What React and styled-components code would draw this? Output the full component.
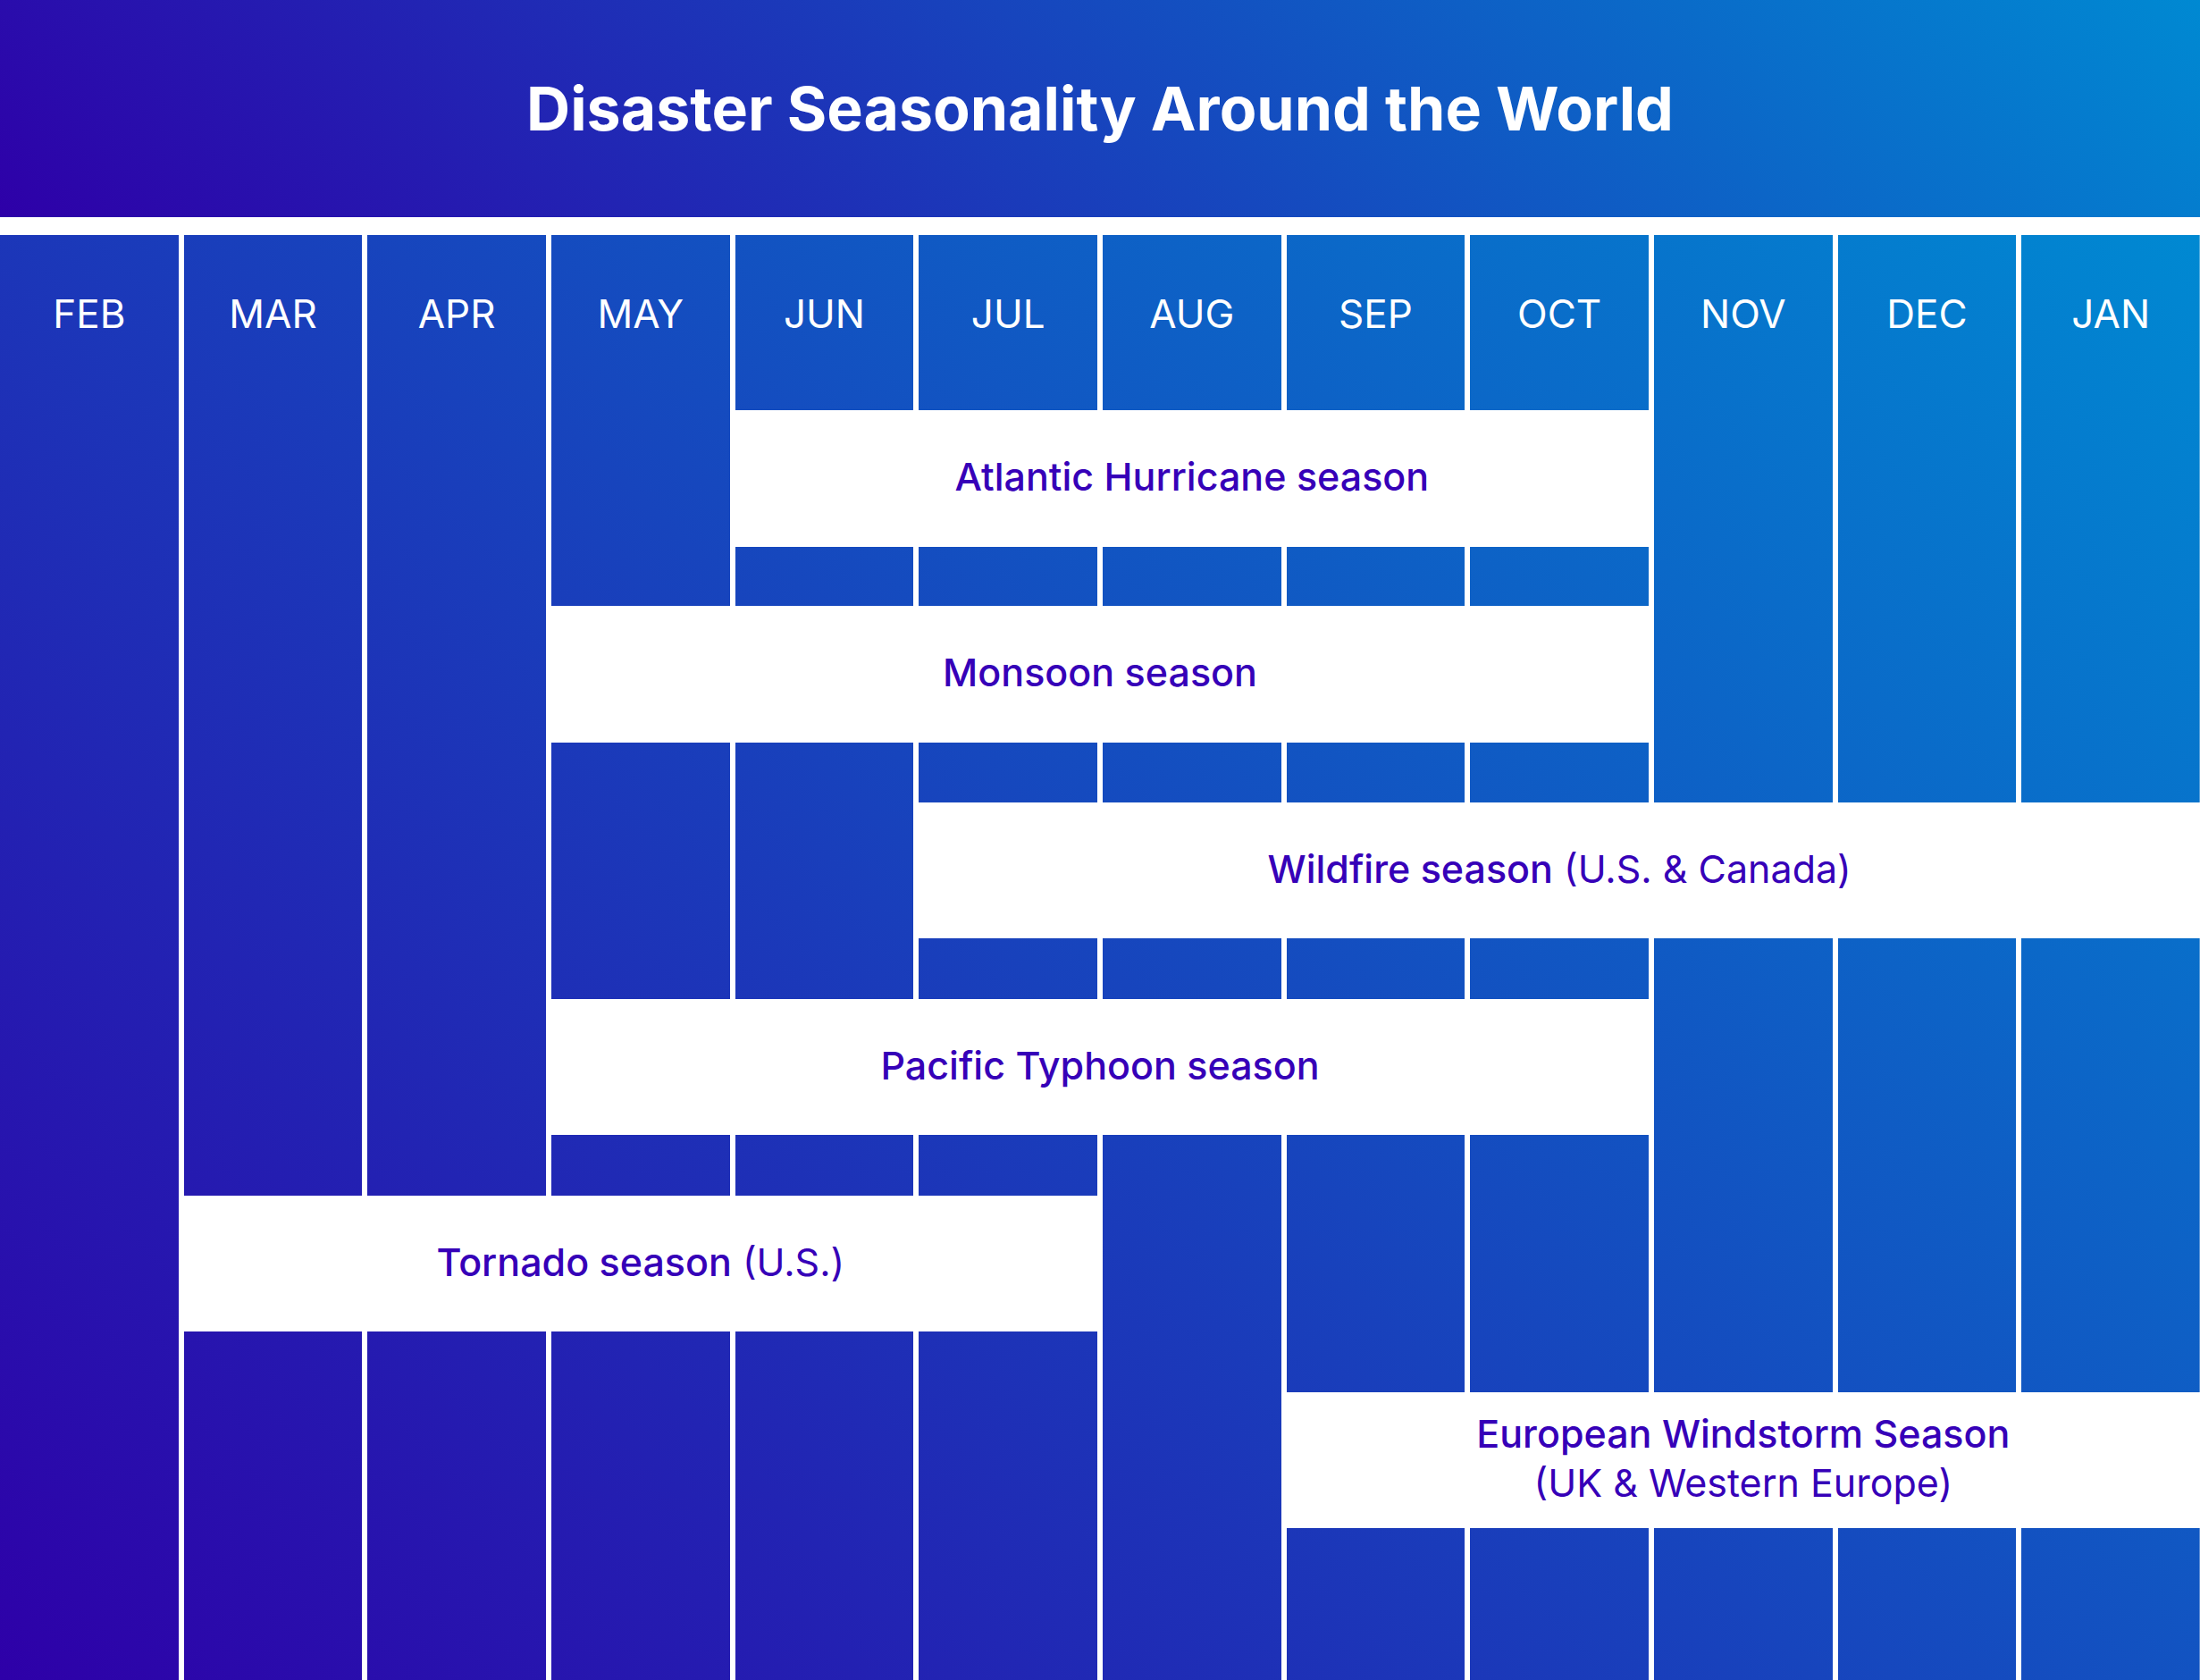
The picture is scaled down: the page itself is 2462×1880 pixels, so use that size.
import React from "react";
import styled, { createGlobalStyle } from "styled-components";

const GlobalStyle = createGlobalStyle`
  html, body {
    margin: 0;
    padding: 0;
    background: #ffffff;
    overflow: hidden;
  }
  body {
    font-family: Inter, "Noto Sans", sans-serif;
  }
`;

const Page = styled.div`
  width: 100vw;
  height: 100vh;
  display: flex;
  flex-direction: column;
  background: #ffffff;
`;

const Header = styled.header`
  flex: none;
  height: 243px;
  display: flex;
  align-items: center;
  justify-content: center;
  background: linear-gradient(45deg, #2e00a8, #0089d2);
`;

const Title = styled.h1`
  margin: 0 0 2px;
  color: #ffffff;
  font-size: 68px;
  font-weight: 700;
  letter-spacing: 0;
`;

const Chart = styled.div`
  flex: 1;
  margin-top: 20px;
  display: grid;
  grid-template-columns: repeat(12, 1fr);
  grid-template-rows: 196px 153px 66px 153px 67px 152px 68px 152px 68px 152px 68px 152px 1fr;
  column-gap: 6px;
`;

const Segment = styled.div`
  grid-column: ${(p) => p.$col};
  grid-row: ${(p) => p.$from} / ${(p) => p.$to};
  background-image: linear-gradient(45deg, #2e00a8, #0089d2);
  background-attachment: fixed;
  background-repeat: no-repeat;
  background-size: 100vw calc(100vh - 263px);
  background-position: 0 263px;
  display: flex;
  justify-content: center;
`;

const Month = styled.span`
  margin-top: 68px;
  color: #ffffff;
  font-size: 44px;
  font-weight: 400;
  line-height: 40px;
  height: 40px;
`;

const Band = styled.div`
  grid-column: ${(p) => p.$cols};
  grid-row: ${(p) => p.$row};
  display: flex;
  flex-direction: column;
  align-items: center;
  justify-content: center;
  padding-bottom: 4px;
  color: #3600b8;
  font-size: 43px;
  line-height: 55px;
  text-align: center;
`;

const Line = styled.div`
  white-space: nowrap;
`;

const Strong = styled.span`
  font-weight: 500;
`;

const Note = styled.span`
  font-weight: 400;
`;

// grid row lines: odd tracks are month blocks, even tracks are season bands
const months = [
  { name: "FEB", segs: [[1, 14]] },
  { name: "MAR", segs: [[1, 10], [11, 14]] },
  { name: "APR", segs: [[1, 10], [11, 14]] },
  { name: "MAY", segs: [[1, 4], [5, 8], [9, 10], [11, 14]] },
  { name: "JUN", segs: [[1, 2], [3, 4], [5, 8], [9, 10], [11, 14]] },
  { name: "JUL", segs: [[1, 2], [3, 4], [5, 6], [7, 8], [9, 10], [11, 14]] },
  { name: "AUG", segs: [[1, 2], [3, 4], [5, 6], [7, 8], [9, 14]] },
  { name: "SEP", segs: [[1, 2], [3, 4], [5, 6], [7, 8], [9, 12], [13, 14]] },
  { name: "OCT", segs: [[1, 2], [3, 4], [5, 6], [7, 8], [9, 12], [13, 14]] },
  { name: "NOV", segs: [[1, 6], [7, 12], [13, 14]] },
  { name: "DEC", segs: [[1, 6], [7, 12], [13, 14]] },
  { name: "JAN", segs: [[1, 6], [7, 12], [13, 14]] },
];

const seasons = [
  { row: 2, cols: "5 / 10", lines: [["Atlantic Hurricane season"]] },
  { row: 4, cols: "4 / 10", lines: [["Monsoon season"]] },
  { row: 6, cols: "6 / 13", lines: [["Wildfire season", "(U.S. & Canada)"]] },
  { row: 8, cols: "4 / 10", lines: [["Pacific Typhoon season"]] },
  { row: 10, cols: "2 / 7", lines: [["Tornado season", "(U.S.)"]] },
  {
    row: 12,
    cols: "8 / 13",
    lines: [["European Windstorm Season"], ["", "(UK & Western Europe)"]],
  },
];

const App = () => {
  return (
    <Page>
      <GlobalStyle />
      <Header>
        <Title>Disaster Seasonality Around the World</Title>
      </Header>
      <Chart>
        {months.map((m, i) =>
          m.segs.map(([from, to], j) => (
            <Segment key={m.name + j} $col={i + 1} $from={from} $to={to}>
              {j === 0 && <Month>{m.name}</Month>}
            </Segment>
          ))
        )}
        {seasons.map((s) => (
          <Band key={s.row} $row={s.row} $cols={s.cols}>
            {s.lines.map(([strong, note], k) => (
              <Line key={k}>
                {strong && <Strong>{strong}</Strong>}
                {strong && note ? " " : null}
                {note && <Note>{note}</Note>}
              </Line>
            ))}
          </Band>
        ))}
      </Chart>
    </Page>
  );
};

export default App;
